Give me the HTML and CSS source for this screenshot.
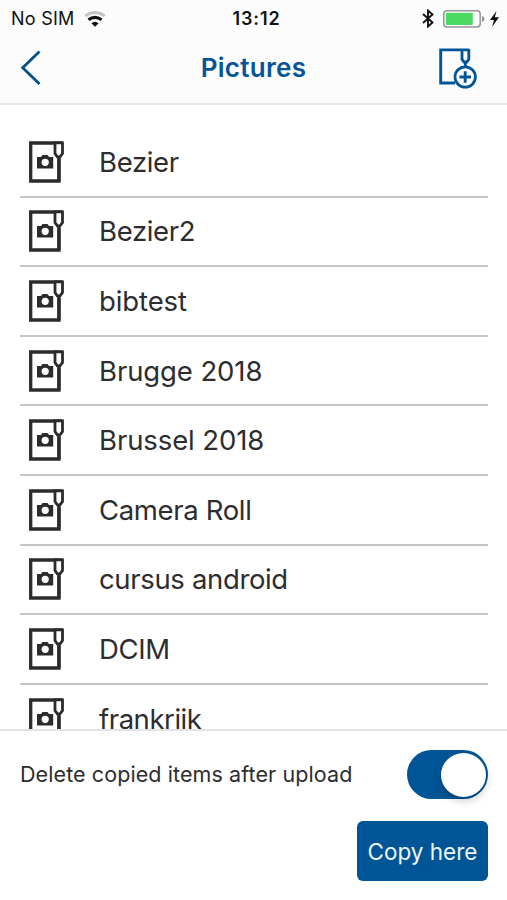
FILE: index.html
```html
<!DOCTYPE html>
<html lang="en">
<head>
<meta charset="utf-8">
<title>Pictures</title>
<link rel="stylesheet" href="styles.css">
</head>
<body>
<svg width="0" height="0" class="defs" aria-hidden="true">
  <symbol id="folder" viewBox="0 0 38 44">
    <path d="M31 19V41H2.7V3H34.5" fill="none" stroke="#2b2b2e" stroke-width="3.3"/>
    <path d="M27 2.8V13.5L29.3 16.9H32L34.5 13.5V2.8Z" fill="#fff" stroke="#2b2b2e" stroke-width="2.8"/>
    <path d="M30.9 16V41" stroke="#2b2b2e" stroke-width="3.3"/>
    <path d="M9 17H13L14.5 15H19.5L21 17H25.2V28.4H9Z" fill="#2b2b2e"/>
    <circle cx="17.2" cy="22.3" r="3.6" fill="#fff"/>
  </symbol>
</svg>
<div class="screen">
  <header class="top">
    <div class="status">
      <div class="carrier"><span>No SIM</span>
        <svg width="22" height="16" viewBox="0 0 22 16"><g fill="none" stroke-width="3"><path d="M1.2 5Q11-2 20.8 5" stroke="#c2c2c2"/><path d="M4.4 8.7Q11 4 17.6 8.7" stroke="#111"/></g><path d="M7.4 12.3Q11 9 14.6 12.3L11 15.8Z" fill="#111"/></svg>
      </div>
      <span class="clock">13:12</span>
      <div class="power">
        <svg width="12" height="19" viewBox="0 0 12 19"><path d="M1 5L10.5 13.5L6 17.5V1.5L10.5 5.5L1 14" fill="none" stroke="#111" stroke-width="1.9"/></svg>
        <svg width="43" height="18" viewBox="0 0 43 18"><rect x=".8" y=".8" width="36.4" height="16.2" rx="3.2" fill="#fff" stroke="#959595" stroke-width="1.5"/><rect x="2.8" y="2.8" width="27" height="12.2" rx="1" fill="#4cd964"/><path d="M39 6Q41.5 6.5 41.5 9T39 12Z" fill="#959595"/></svg>
        <svg width="9" height="16" viewBox="0 0 9 16"><path d="M6.4 0L0 9H4L2 16L9 6.3H4.9Z" fill="#111"/></svg>
      </div>
    </div>
    <div class="nav">
      <svg width="22" height="36" viewBox="0 0 22 36"><path d="M19.5 1.5L2.7 17.8L19.5 34" fill="none" stroke="#064f8e" stroke-width="2.8"/></svg>
      <h1>Pictures</h1>
      <svg width="40" height="42" viewBox="0 0 40 42" fill="none" stroke="#005596"><path d="M17 36H2.7V2.9H31" stroke-width="2.9"/><path d="M24 2V12.3L26 15H28.8L30.8 12.3V2M27.4 14.5V20" stroke-width="2.8"/><circle cx="27.2" cy="30" r="10.2" stroke-width="2.7"/><path d="M21.4 30H33M27.2 24.2V35.8" stroke-width="2.9"/></svg>
    </div>
  </header>
  <main class="list">
    <div class="row"><svg><use href="#folder"/></svg><span>Bezier</span></div>
    <div class="row"><svg><use href="#folder"/></svg><span>Bezier2</span></div>
    <div class="row"><svg><use href="#folder"/></svg><span class="wide">bibtest</span></div>
    <div class="row"><svg><use href="#folder"/></svg><span class="wide">Brugge 2018</span></div>
    <div class="row"><svg><use href="#folder"/></svg><span class="wide">Brussel 2018</span></div>
    <div class="row"><svg><use href="#folder"/></svg><span>Camera Roll</span></div>
    <div class="row"><svg><use href="#folder"/></svg><span>cursus android</span></div>
    <div class="row"><svg><use href="#folder"/></svg><span>DCIM</span></div>
    <div class="row"><svg><use href="#folder"/></svg><span class="narrow">frankrijk</span></div>
  </main>
  <footer class="bottom">
    <div class="option"><span>Delete copied items after upload</span><div class="switch"><div class="knob"></div></div></div>
    <button class="copy">Copy here</button>
  </footer>
</div>
</body>
</html>
```

FILE: styles.css
```css
* { box-sizing: border-box; }
body { margin: 0; font-family: Inter, "Liberation Sans", sans-serif; color: #2d2d30; background: #fff; }
.defs { position: absolute; }
svg { display: block; flex: none; }
.screen { width: 507px; height: 900px; display: flex; flex-direction: column; overflow: hidden; }
.top { height: 105px; flex: none; background: #fcfcfd; border-bottom: 2px solid #e7e7e8; }
.status { height: 37px; display: grid; grid-template-columns: 1fr auto 1fr; align-items: center; padding: 0 8px 0 11px; color: #111; }
.carrier { display: flex; align-items: center; gap: 9px; font-size: 18px; letter-spacing: .25px; }
.clock { margin-left: 3px; font-size: 18px; font-weight: 600; letter-spacing: .9px; }
.power { display: flex; align-items: center; justify-content: flex-end; }
.power svg:first-child { margin-right: 9px; }
.power svg:last-child { margin-left: 4px; }
.nav { height: 61px; display: grid; grid-template-columns: 1fr auto 1fr; align-items: center; padding: 0 29px 0 20px; }
.nav svg:last-child { justify-self: end; }
.nav h1 { margin: 0 0 0 9px; font-size: 26px; line-height: 32px; font-weight: 600; letter-spacing: .3px; color: #075596; }
.list { flex: 1; min-height: 0; overflow: hidden; padding: 23px 19px 0 20px; }
.row { height: 69.6px; display: flex; align-items: center; border-bottom: 2px solid #c5c5c7; font-size: 27.5px; line-height: 34px; letter-spacing: -.35px; }
.row svg { width: 38px; height: 44px; margin: 0 33px 0 8px; }
.row span { white-space: nowrap; }
.row .wide { letter-spacing: -.1px; }
.row .narrow { letter-spacing: -.45px; }
.bottom { height: 171px; flex: none; border-top: 2px solid #e3e3e5; padding: 19px 19px 0 20px; display: flex; flex-direction: column; background: #fff; }
.option { display: flex; align-items: center; justify-content: space-between; height: 49px; font-size: 21.5px; letter-spacing: .09px; white-space: nowrap; }
.option span { padding-bottom: 1px; }
.switch { width: 81px; height: 49px; border-radius: 25px; background: #005596; display: flex; justify-content: flex-end; padding: 2.5px; }
.knob { width: 45px; height: 44px; border-radius: 50%; background: #fff; box-shadow: 0 4px 9px rgba(0,0,0,.2); }
.copy { width: 131px; height: 60px; margin: 22px 0 0; align-self: flex-end; padding: 0; border: 0; border-radius: 6px; background: #005596; color: #eef6fc; font: 22.5px Inter, "Liberation Sans", sans-serif; white-space: nowrap; }
```
